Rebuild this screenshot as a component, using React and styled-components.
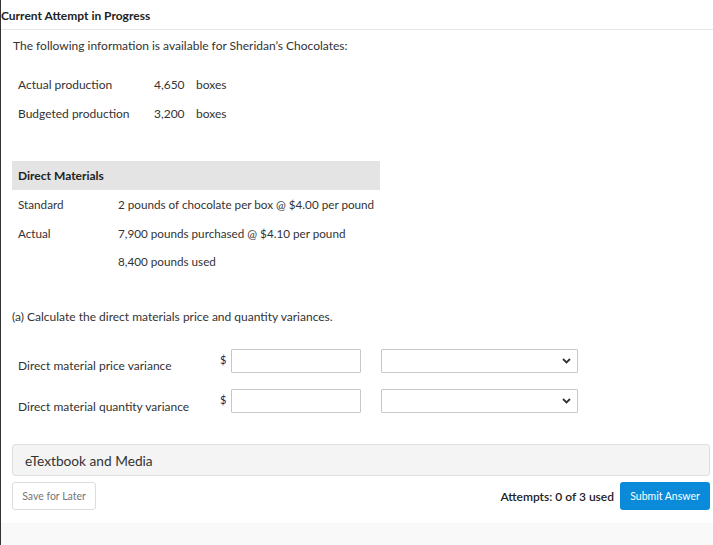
import React from 'react'
import styled, { createGlobalStyle } from 'styled-components'

const GlobalStyle = createGlobalStyle`
  html, body {
    margin: 0;
    padding: 0;
    background: #ffffff;
  }
  body {
    font-family: Lato, "Open Sans", sans-serif;
    color: #333333;
  }
`

const Page = styled.div`
  width: 713px;
  height: 545px;
  display: flex;
  flex-direction: column;
  border-left: 1px solid #333;
  box-sizing: border-box;
  overflow: hidden;
`

const Header = styled.div`
  height: 30px;
  box-sizing: border-box;
  border-bottom: 1px solid #e6e6e6;
  display: flex;
  align-items: center;
  padding-top: 2px;
  font-size: 12px;
  font-weight: 700;
  color: #222;
`

const Body = styled.div`
  flex: 1;
  padding: 0 3px 0 11px;
  display: flex;
  flex-direction: column;
`

const Intro = styled.p`
  margin: 9px 0 0 1px;
  font-size: 12px;
  line-height: 14px;
`

const InfoTable = styled.div`
  margin: 25px 0 0 6px;
  display: grid;
  grid-template-columns: 136px 42px auto;
  row-gap: 15px;
  font-size: 12px;
  line-height: 14px;
`

const MatTable = styled.div`
  margin-top: 40px;
  width: 368px;
  font-size: 11.7px;
`

const MatHead = styled.div`
  height: 29px;
  background: #e4e4e4;
  display: flex;
  align-items: center;
  padding-left: 6px;
  font-weight: 700;
  font-size: 12px;
  color: #222;
`

const MatRows = styled.div`
  display: grid;
  grid-template-columns: 100px auto;
  padding: 7px 0 0 6px;
  row-gap: 14.5px;
  line-height: 14px;
`

const Question = styled.p`
  margin: 42px 0 0 0;
  font-size: 12px;
  line-height: 14px;
`

const Answers = styled.div`
  margin-top: 25px;
  display: flex;
  flex-direction: column;
  gap: 16px;
  padding-left: 6px;
`

const AnswerRow = styled.div`
  display: flex;
  align-items: flex-start;
  height: 24px;
`

const AnswerLabel = styled.div`
  width: 202px;
  font-size: 12px;
  padding-top: ${p => p.$top}px;
`

const Dollar = styled.span`
  width: 11px;
  font-size: 11px;
  color: #225;
  margin-top: 4px;
`

const Field = styled.input`
  width: 130px;
  height: 24px;
  box-sizing: border-box;
  border: 1px solid #c8c8c8;
  border-radius: 1px;
  margin: 0;
  padding: 0 4px;
  font-family: inherit;
`

const SelectBox = styled.div`
  width: 197px;
  height: 24px;
  margin-left: 20px;
  box-sizing: border-box;
  border: 1px solid #c8c8c8;
  border-radius: 1px;
  display: flex;
  align-items: center;
  justify-content: flex-end;
  padding-right: 6px;
`

const MediaBar = styled.div`
  margin-top: 31px;
  height: 32px;
  box-sizing: border-box;
  border: 1px solid #dedede;
  border-radius: 3px;
  background: #f4f4f4;
  display: flex;
  align-items: center;
  padding-left: 12px;
  font-size: 13.7px;
  color: #333;
`

const Footer = styled.div`
  margin-top: 6px;
  display: flex;
  align-items: center;
  justify-content: space-between;
`

const SaveButton = styled.button`
  width: 84px;
  height: 28px;
  border: 1px solid #dcdcdc;
  border-radius: 3px;
  background: #fff;
  color: #777;
  font-family: inherit;
  font-size: 10.5px;
  padding: 0;
`

const Right = styled.div`
  display: flex;
  align-items: center;
  gap: 6px;
`

const Attempts = styled.span`
  font-size: 12px;
  font-weight: 600;
  color: #222;
`

const SubmitButton = styled.button`
  width: 90px;
  height: 28px;
  border: none;
  border-radius: 3px;
  background: #0a8ad9;
  color: #fff;
  font-family: inherit;
  font-size: 10.5px;
  padding: 0;
`

const BottomStrip = styled.div`
  height: 22px;
  background: #f9f9f9;
`

const Chevron = () => (
  <svg width="9" height="6" viewBox="0 0 9 6">
    <path d="M1 1 L4.5 4.5 L8 1" fill="none" stroke="#333" strokeWidth="1.8" />
  </svg>
)

const answerRows = [
  { label: 'Direct material price variance', top: 9 },
  { label: 'Direct material quantity variance', top: 10 }
]

export default function App() {
  return (
    <>
      <GlobalStyle />
      <Page>
        <Header>Current Attempt in Progress</Header>
        <Body>
          <Intro>The following information is available for Sheridan’s Chocolates:</Intro>
          <InfoTable>
            <span>Actual production</span>
            <span>4,650</span>
            <span>boxes</span>
            <span>Budgeted production</span>
            <span>3,200</span>
            <span>boxes</span>
          </InfoTable>
          <MatTable>
            <MatHead>Direct Materials</MatHead>
            <MatRows>
              <span>Standard</span>
              <span>2 pounds of chocolate per box @ $4.00 per pound</span>
              <span>Actual</span>
              <span>7,900 pounds purchased @ $4.10 per pound</span>
              <span></span>
              <span>8,400 pounds used</span>
            </MatRows>
          </MatTable>
          <Question>(a) Calculate the direct materials price and quantity variances.</Question>
          <Answers>
            {answerRows.map(r => (
              <AnswerRow key={r.label}>
                <AnswerLabel $top={r.top}>{r.label}</AnswerLabel>
                <Dollar>$</Dollar>
                <Field type="text" />
                <SelectBox>
                  <Chevron />
                </SelectBox>
              </AnswerRow>
            ))}
          </Answers>
          <MediaBar>eTextbook and Media</MediaBar>
          <Footer>
            <SaveButton>Save for Later</SaveButton>
            <Right>
              <Attempts>Attempts: 0 of 3 used</Attempts>
              <SubmitButton>Submit Answer</SubmitButton>
            </Right>
          </Footer>
        </Body>
        <BottomStrip />
      </Page>
    </>
  )
}
